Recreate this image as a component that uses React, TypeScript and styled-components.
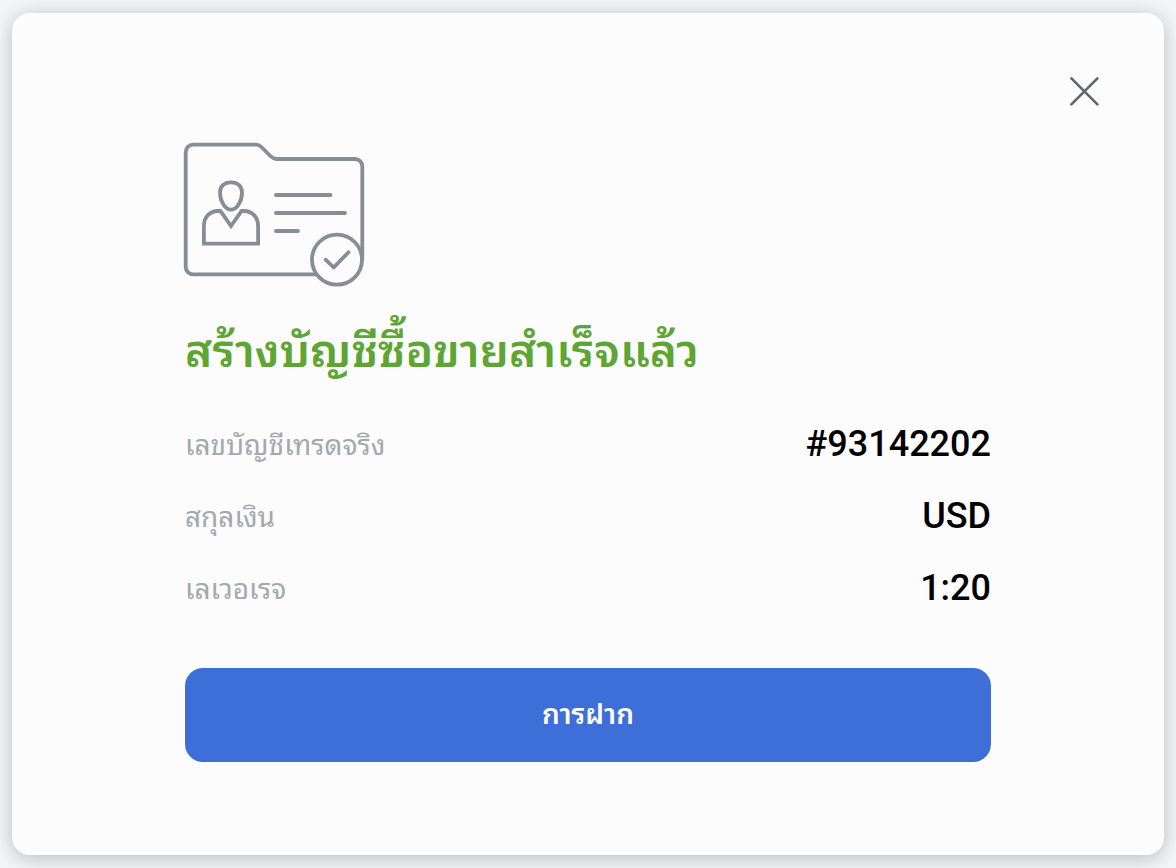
import React from "react";
import styled, { createGlobalStyle } from "styled-components";

const Global = createGlobalStyle`
  * { box-sizing: border-box; }
  body { margin: 0; background: #f4f5f7; font-family: Roboto, "Noto Sans Thai Looped", "Noto Looped Thai", Loma, Garuda, Waree, "Noto Serif Thai", sans-serif; }
`;
const Page = styled.main`
  min-height: 100vh;
  padding: 13px 12px;
  display: flex;
`;
const Card = styled.section`
  flex: 1;
  display: flex;
  flex-direction: column;
  background: #fcfcfc;
  border-radius: 18px;
  box-shadow: 0 3px 20px rgba(0, 0, 0, 0.24);
  padding: 56px 58px 93px;
`;
const CloseButton = styled.button`
  align-self: flex-end;
  width: 44px;
  height: 44px;
  padding: 0;
  border: 0;
  background: none;
  cursor: pointer;
  color: #5f6673;
  svg { display: block; margin: auto; }
`;
const Content = styled.div`
  padding: 28px 115px 0;
`;
const FolderIcon = styled.svg`
  display: block;
  overflow: visible;
`;
const Title = styled.h1`
  margin: 32px 0 25px;
  font-size: 46px;
  line-height: 64px;
  font-weight: 600;
  color: #5ea633;
`;
const Details = styled.dl`
  margin: 0;
`;
const Row = styled.div`
  display: flex;
  justify-content: space-between;
  align-items: center;
  height: 72px;
`;
const Label = styled.dt`
  padding-bottom: 4px;
  font-size: 28px;
  color: #a3a8b0;
`;
const Value = styled.dd`
  margin: 0;
  font-size: 36px;
  font-weight: 500;
  color: #000;
`;
const DepositButton = styled.button`
  display: block;
  width: 100%;
  height: 94px;
  margin-top: 44px;
  padding: 0 24px 8px;
  border: 0;
  border-radius: 18px;
  background: #3e6fd8;
  color: #fff;
  font: inherit;
  font-size: 28px;
  font-weight: 600;
  cursor: pointer;
`;

const details = [
  { label: "เลขบัญชีเทรดจริง", value: "#93142202" },
  { label: "สกุลเงิน", value: "USD" },
  { label: "เลเวอเรจ", value: "1:20" },
];

export default function App() {
  return (
    <Page>
      <Global />
      <Card>
        <CloseButton type="button" aria-label="ปิด">
          <svg width="30" height="30" viewBox="0 0 30 30" fill="none" stroke="currentColor" strokeWidth="2.6" strokeLinecap="round">
            <path d="M2.400 2.400 28.400 28.400M28.400 2.400 2.400 28.400" />
          </svg>
        </CloseButton>
        <Content>
          <FolderIcon width="180" height="146" viewBox="0 0 180 146" fill="none" stroke="#868d97" strokeWidth="3.8" strokeLinecap="round" strokeLinejoin="round" aria-hidden="true">
            <path d="M131 133.3H8a7.3 7.3 0 0 1-7.3-7.3V11A7.3 7.3 0 0 1 8 3.7h63q3 0 5.4 2.3l9 9q3 3 6 3H170a7.3 7.3 0 0 1 7.3 7.3V118" />
            <circle cx="152" cy="118.7" r="25" />
            <path d="M140.7 118.7l8 7.8 14.8-15.3" />
            <path d="M91 54h54.5M91 72h69M91 90h22" />
            <path d="M46 41.300c7 0 11 4 11 10.500 0 8-5 16.900-11 16.900s-11-8.900-11-16.900c0-6.500 4-10.500 11-10.500z" />
            <path d="M18.900 102.700V85c0-9 6-15 14-15h2.500l10.600 15 10.600-15h2.500c8 0 14 6 14 15v17.700z" strokeLinejoin="miter" />
          </FolderIcon>
          <Title>สร้างบัญชีซื้อขายสำเร็จแล้ว</Title>
          <Details>
            {details.map((d) => (
              <Row key={d.label}>
                <Label>{d.label}</Label>
                <Value>{d.value}</Value>
              </Row>
            ))}
          </Details>
          <DepositButton type="button">การฝาก</DepositButton>
        </Content>
      </Card>
    </Page>
  );
}
